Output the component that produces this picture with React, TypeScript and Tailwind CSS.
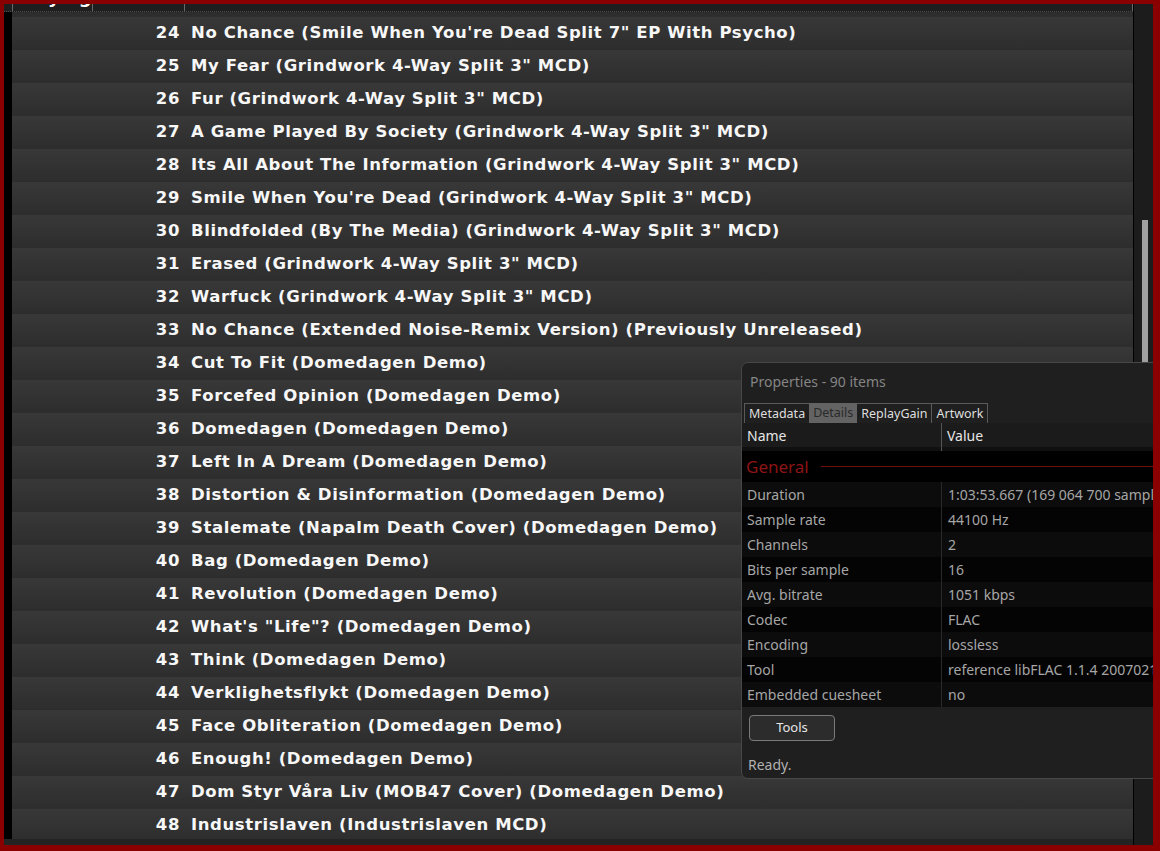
import React from "react";

const tracks: [number, string][] = [
  [24, "No Chance (Smile When You're Dead Split 7\" EP With Psycho)"],
  [25, "My Fear (Grindwork 4-Way Split 3\" MCD)"],
  [26, "Fur (Grindwork 4-Way Split 3\" MCD)"],
  [27, "A Game Played By Society (Grindwork 4-Way Split 3\" MCD)"],
  [28, "Its All About The Information (Grindwork 4-Way Split 3\" MCD)"],
  [29, "Smile When You're Dead (Grindwork 4-Way Split 3\" MCD)"],
  [30, "Blindfolded (By The Media) (Grindwork 4-Way Split 3\" MCD)"],
  [31, "Erased (Grindwork 4-Way Split 3\" MCD)"],
  [32, "Warfuck (Grindwork 4-Way Split 3\" MCD)"],
  [33, "No Chance (Extended Noise-Remix Version) (Previously Unreleased)"],
  [34, "Cut To Fit (Domedagen Demo)"],
  [35, "Forcefed Opinion (Domedagen Demo)"],
  [36, "Domedagen (Domedagen Demo)"],
  [37, "Left In A Dream (Domedagen Demo)"],
  [38, "Distortion & Disinformation (Domedagen Demo)"],
  [39, "Stalemate (Napalm Death Cover) (Domedagen Demo)"],
  [40, "Bag (Domedagen Demo)"],
  [41, "Revolution (Domedagen Demo)"],
  [42, "What's \"Life\"? (Domedagen Demo)"],
  [43, "Think (Domedagen Demo)"],
  [44, "Verklighetsflykt (Domedagen Demo)"],
  [45, "Face Obliteration (Domedagen Demo)"],
  [46, "Enough! (Domedagen Demo)"],
  [47, "Dom Styr Våra Liv (MOB47 Cover) (Domedagen Demo)"],
  [48, "Industrislaven (Industrislaven MCD)"],
];

const props: [string, string][] = [
  ["Duration", "1:03:53.667 (169 064 700 samples)"],
  ["Sample rate", "44100 Hz"],
  ["Channels", "2"],
  ["Bits per sample", "16"],
  ["Avg. bitrate", "1051 kbps"],
  ["Codec", "FLAC"],
  ["Encoding", "lossless"],
  ["Tool", "reference libFLAC 1.1.4 20070213"],
  ["Embedded cuesheet", "no"],
];

const rowFont = { fontFamily: '"DejaVu Sans", Verdana, sans-serif' };
const uiFont = { fontFamily: '"Noto Sans", "Open Sans", sans-serif' };

export default function App() {
  return (
    <div className="w-[1160px] h-[851px] bg-[#8a0000] pt-[4px] pl-[4px] pr-[7px] pb-[6px] overflow-hidden">
      <div className="relative w-full h-full flex overflow-hidden">
        {/* main column */}
        <div className="flex flex-col w-[1129px] h-full">
          {/* header */}
          <div className="h-[8px] flex bg-[#1e1e1e] border-b border-dotted border-[#4a4a4a] overflow-hidden">
            <div className="w-[8px] shrink-0" />
            <div className="w-[80px] shrink-0 border-l border-[#6a6a6a] overflow-hidden">
              <div
                className="mt-[-16px] ml-[4px] text-[18px] leading-[18px] font-bold text-white whitespace-nowrap"
                style={rowFont}
              >
                Playing
              </div>
            </div>
            <div className="w-[92px] shrink-0 border-l border-[#6a6a6a]" />
            <div className="flex-1 border-l border-[#6a6a6a]" />
            <div className="w-[1px] bg-[#6a6a6a]" />
          </div>
          {/* list */}
          <div className="flex flex-1 min-h-0">
            <div className="w-[8px] shrink-0 bg-black" />
            <div className="flex-1 overflow-hidden bg-[#2d2d2d] pt-[5px]">
              {tracks.map(([n, t]) => (
                <div
                  key={n}
                  className="h-[33px] flex items-center bg-gradient-to-b from-[#383838] to-[#2d2d2d] text-[16.5px] tracking-[0.6px] font-bold text-[#f7f7f7] whitespace-nowrap"
                  style={rowFont}
                >
                  <div className="w-[168px] shrink-0 text-right">{n}</div>
                  <div className="pl-[11px]">{t}</div>
                </div>
              ))}
            </div>
          </div>
          {/* bottom strip */}
          <div className="h-[6px] bg-[#232323]" />
        </div>
        {/* divider */}
        <div className="w-[1px] h-full bg-black" />
        {/* scrollbar */}
        <div className="flex-1 h-full bg-[#1c1c1c] flex flex-col">
          <div className="h-[216px]" />
          <div className="ml-[8px] w-[6px] h-[180px] bg-[#a0a0a0]" />
        </div>

        {/* properties panel */}
        <div
          className="absolute left-[737px] top-[358px] w-[470px] h-[417px] rounded-[7px] border border-[#474747] bg-[#1f1f1f] flex flex-col overflow-hidden"
          style={uiFont}
        >
          <div className="pt-[9px] pl-[8px] h-[29px] leading-[20px] text-[14px] text-[#858585]">
            Properties - 90 items
          </div>
          <div className="mt-[11px] pl-[2px] flex h-[20px] text-[12.5px] leading-[19px] text-[#dedede]">
            <div className="px-[4px] border-l border-t border-[#5a5a5a]">Metadata</div>
            <div className="px-[4px] bg-[#636363] text-[#2a2a2a]">Details</div>
            <div className="px-[4px] border-t border-[#5a5a5a]">ReplayGain</div>
            <div className="px-[4px] border-l border-r border-t border-[#5a5a5a]">Artwork</div>
          </div>
          <div className="h-[24px] flex items-center bg-[#1b1b1b] text-[14px] text-[#e6e6e6]">
            <div className="w-[200px] pl-[5px] h-full flex items-center border-r border-[#555]">Name</div>
            <div className="pl-[5px]">Value</div>
          </div>
          <div className="h-[4px] bg-[#101010] flex">
            <div className="w-[200px] border-r border-[#555]" />
          </div>
          <div className="h-[256px] bg-black flex flex-col">
            <div className="h-[31px] flex items-center pl-[4px]">
              <span className="text-[17px] text-[#8c1414]">General</span>
              <div className="flex-1 ml-[12px] h-[1px] bg-[#6e1010]" />
            </div>
            {props.map(([k, v], i) => (
              <div
                key={k}
                className={`h-[25px] flex items-center text-[14px] text-[#a6a6a6] whitespace-nowrap ${
                  i % 2 === 0 ? "bg-[#0c0c0c]" : "bg-[#040404]"
                }`}
              >
                <div className="w-[200px] pl-[5px] h-full flex items-center border-r border-[#2a2a2a]">{k}</div>
                <div className="pl-[6px]">{v}</div>
              </div>
            ))}
          </div>
          <div className="pt-[8px] pl-[7px]">
            <div className="w-[86px] h-[26px] rounded-[4px] border border-[#7a7a7a] bg-[#2c2c2c] flex items-center justify-center text-[13px] text-[#e6e6e6]">
              Tools
            </div>
          </div>
          <div className="mt-[15px] pl-[6px] h-[18px] leading-[18px] text-[14px] text-[#b0b0b0]">Ready.</div>
        </div>
      </div>
    </div>
  );
}
